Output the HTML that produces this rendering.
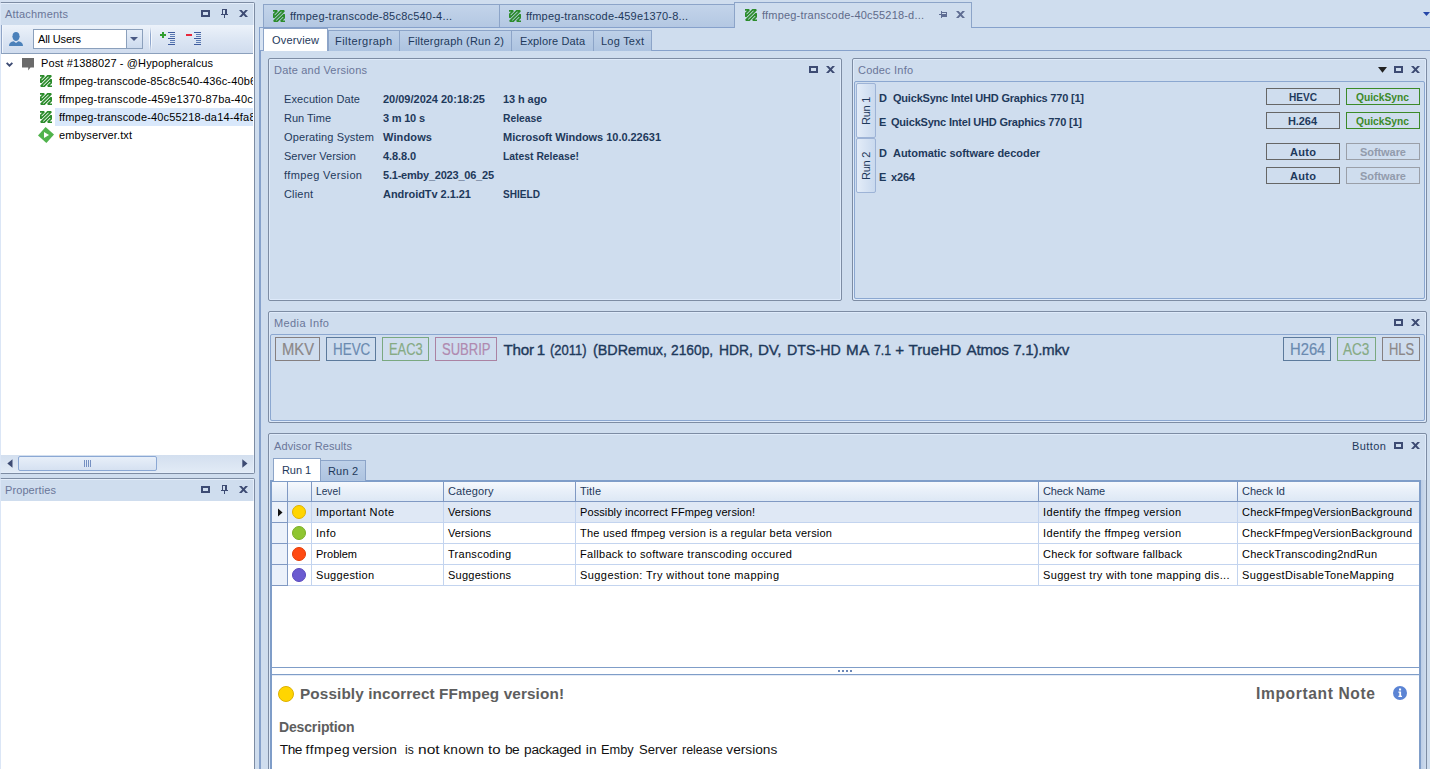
<!DOCTYPE html>
<html><head><meta charset="utf-8"><title>Diagnostics</title>
<style>
html,body{margin:0;padding:0;}
body{width:1430px;height:769px;overflow:hidden;position:relative;background:#cfddee;font-family:"Liberation Sans",sans-serif;}
body div,body span.t,body svg{position:absolute;box-sizing:border-box;}
span.t{white-space:pre;}

</style></head>
<body>
<div style="left:0px;top:0px;width:256px;height:2px;background:#d5e1f1"></div>
<div style="left:0px;top:2px;width:255px;height:472px;border:1px solid #7d8ca3;border-left:1px solid #dbe6f6;border-radius:0 2px 2px 0;background:#fff"></div>
<div style="left:1px;top:3px;width:253px;height:1px;background:#e4eefb"></div>
<div style="left:1px;top:4px;width:252px;height:21px;background:#cfddee"></div>
<span class="t" style="left:5px;top:8.69px;font-size:11px;line-height:11px;font-weight:400;color:#6a7699;letter-spacing:0.186px;">Attachments</span>
<svg style="left:201px;top:10px" width="9" height="7" viewBox="0 0 9 7" shape-rendering="crispEdges"><path d="M0 0h9v7h-9z M2 2v3h5v-3z" fill="#3d4b73" fill-rule="evenodd"/></svg>
<svg style="left:221px;top:9px" width="7" height="9" viewBox="0 0 7 9" shape-rendering="crispEdges"><path d="M1 0h5v5h1v1h-3v3h-1v-3h-3v-1h1z M2 1v4h2v-4z" fill="#3d4b73" fill-rule="evenodd"/></svg>
<svg style="left:239px;top:10px" width="9" height="7" viewBox="0 0 9 7"><path d="M0 0h2.6l1.9 2 1.9-2h2.6l-3.2 3.5 3.2 3.5h-2.6l-1.9-2-1.9 2h-2.6l3.2-3.5z" fill="#3d4b73"/></svg>
<div style="left:1px;top:25px;width:252px;height:29px;background:linear-gradient(#ecf2fa,#dbe5f3 55%,#d0dcee);border-bottom:1px solid #8ba0bc;border-left:1px solid #8fa4c6;box-shadow:inset 1px 0 0 #f0f5fc"></div>
<svg style="left:9px;top:32px" width="14" height="14" viewBox="0 0 14 14"><path d="M7 0c2 0 3.4 1.3 3.4 3.4v.7c.5 0 .5 1.2 0 1.3-.3 2-1.700 3.500-3.400 3.500s-3.100-1.500-3.400-3.500c-.5-.1-.5-1.300 0-1.300v-.7C3.600 1.300 5 0 7 0z" fill="#4b81ba"/><path d="M0 14c0-3 1.800-4.100 4.700-4.700L7 11l2.300-1.700c2.900.6 4.700 1.700 4.700 4.700z" fill="#4b81ba"/></svg>
<div style="left:33px;top:29px;width:110px;height:20px;background:#fff;border:1px solid #8ba0bc"></div>
<div style="left:126px;top:30px;width:16px;height:18px;background:linear-gradient(#e6eef9,#cddbee);border-left:1px solid #8ba0bc"></div>
<svg style="left:130px;top:37px" width="8" height="4" viewBox="0 0 8 4"><path d="M0 0h8l-4 4z" fill="#4a5a85"/></svg>
<span class="t" style="left:38px;top:33.69px;font-size:11px;line-height:11px;font-weight:400;color:#000;letter-spacing:-0.127px;">All Users</span>
<div style="left:149px;top:27px;width:3px;height:24px;background:linear-gradient(rgba(255,255,255,0),#f4f8fd 30%,#f4f8fd 70%,rgba(255,255,255,0))"></div>
<div style="left:150px;top:27px;width:1px;height:24px;background:linear-gradient(rgba(110,135,185,0),#8fa6cc 30%,#8fa6cc 70%,rgba(110,135,185,0))"></div>
<svg style="left:160px;top:32px" width="6" height="6" viewBox="0 0 6 6" shape-rendering="crispEdges"><path d="M2 0h2v2h2v2h-2v2h-2v-2h-2v-2h2z" fill="#2f9e2f"/></svg>
<svg style="left:168px;top:32px" width="7" height="13" viewBox="0 0 7 13" shape-rendering="crispEdges"><path d="M0 0h7v1h-7zM0 6h7v1h-7zM0 12h7v1h-7z" fill="#3f5c9e"/><path d="M2 2h5v1h-5zM2 4h5v1h-5zM2 8h5v1h-5zM2 10h5v1h-5z" fill="#5c7bb4"/></svg>
<svg style="left:186px;top:34px" width="6" height="2" viewBox="0 0 6 2" shape-rendering="crispEdges"><rect width="6" height="2" fill="#e8283c"/></svg>
<svg style="left:194px;top:32px" width="7" height="13" viewBox="0 0 7 13" shape-rendering="crispEdges"><path d="M0 0h7v1h-7zM0 6h7v1h-7zM0 12h7v1h-7z" fill="#3f5c9e"/><path d="M2 2h5v1h-5zM2 4h5v1h-5zM2 8h5v1h-5zM2 10h5v1h-5z" fill="#5c7bb4"/></svg>
<svg style="left:6px;top:62px" width="7" height="5" viewBox="0 0 7 5"><path d="M.6 .8L3.500 3.700 6.400 .8" stroke="#3d4b73" stroke-width="1.9" fill="none"/></svg>
<svg style="left:22px;top:58px" width="12" height="13" viewBox="0 0 12 13"><path d="M0 0h12v9.5h-3.5l-2.3 3v-3h-6.2z" fill="#6a6a6a"/></svg>
<span class="t" style="left:41px;top:57.69px;font-size:11px;line-height:11px;font-weight:400;color:#000;letter-spacing:0.127px;">Post #1388027 - @Hypopheralcus</span>
<div style="left:55px;top:108px;width:198px;height:18px;background:#d9e8fb"></div>
<span class="t" style="left:59px;top:75.69px;font-size:11px;line-height:11px;font-weight:400;color:#000;letter-spacing:0.135px;width:194px;overflow:hidden;">ffmpeg-transcode-85c8c540-436c-40b6</span>
<span class="t" style="left:59px;top:93.69px;font-size:11px;line-height:11px;font-weight:400;color:#000;letter-spacing:0.187px;width:194px;overflow:hidden;">ffmpeg-transcode-459e1370-87ba-40c5</span>
<span class="t" style="left:59px;top:111.69px;font-size:11px;line-height:11px;font-weight:400;color:#000;letter-spacing:0.174px;width:194px;overflow:hidden;">ffmpeg-transcode-40c55218-da14-4fa8</span>
<svg style="left:40px;top:75px" width="12" height="12" viewBox="0 0 12 12"><path d="M0 .8H4.2L.8 4.2V7.7L7.7 .8H11.2L.8 11.2H4.3L11.2 4.3V7.8L7.8 11.2H12" stroke="#2c8c2c" stroke-width="1.65" fill="none" stroke-linejoin="miter" stroke-miterlimit="2"/></svg>
<svg style="left:40px;top:93px" width="12" height="12" viewBox="0 0 12 12"><path d="M0 .8H4.2L.8 4.2V7.7L7.7 .8H11.2L.8 11.2H4.3L11.2 4.3V7.8L7.8 11.2H12" stroke="#2c8c2c" stroke-width="1.65" fill="none" stroke-linejoin="miter" stroke-miterlimit="2"/></svg>
<svg style="left:40px;top:111px" width="12" height="12" viewBox="0 0 12 12"><path d="M0 .8H4.2L.8 4.2V7.7L7.7 .8H11.2L.8 11.2H4.3L11.2 4.3V7.8L7.8 11.2H12" stroke="#2c8c2c" stroke-width="1.65" fill="none" stroke-linejoin="miter" stroke-miterlimit="2"/></svg>
<svg style="left:38px;top:127px" width="16" height="16" viewBox="0 0 16 16"><path d="M7.6 0L16 7.6 8.4 16 0 8.4z" fill="#50b34c"/><path d="M6 5L11 8 6 11z" fill="#fff"/></svg>
<span class="t" style="left:59px;top:129.69px;font-size:11px;line-height:11px;font-weight:400;color:#000;letter-spacing:0.113px;">embyserver.txt</span>
<div style="left:1px;top:455px;width:252px;height:18px;background:linear-gradient(#d3dfef,#e2ebf6)"></div>
<div style="left:18px;top:456px;width:139px;height:15px;background:linear-gradient(#e8eff9,#d5e1f1);border:1px solid #8ba8d4;border-radius:2px"></div>
<svg style="left:7px;top:459px" width="6" height="9" viewBox="0 0 6 9"><path d="M5.500 .3v8.400L.3 4.500z" fill="#3d4b73"/></svg>
<svg style="left:242px;top:459px" width="6" height="9" viewBox="0 0 6 9"><path d="M.3 .3v8.400l5.200-4.200z" fill="#3d4b73"/></svg>
<svg style="left:84px;top:460px" width="8" height="7" viewBox="0 0 8 7"><path d="M.5 0v7M2.5 0v7M4.5 0v7M6.5 0v7" stroke="#7590c2" stroke-width="1"/></svg>
<div style="left:1px;top:472px;width:253px;height:1px;background:#e4eefb"></div>
<div style="left:253px;top:4px;width:1px;height:21px;background:#e4eefb"></div>
<div style="left:253px;top:455px;width:1px;height:18px;background:#e4eefb"></div>
<div style="left:0px;top:478px;width:255px;height:300px;border:1px solid #7d8ca3;border-left:1px solid #dbe6f6;border-radius:0 2px 0 0;background:#fff"></div>
<div style="left:1px;top:479px;width:253px;height:1px;background:#e4eefb"></div>
<div style="left:1px;top:480px;width:252px;height:21px;background:#cfddee"></div>
<div style="left:253px;top:480px;width:1px;height:21px;background:#e4eefb"></div>
<span class="t" style="left:5px;top:484.69px;font-size:11px;line-height:11px;font-weight:400;color:#6a7699;letter-spacing:0.095px;">Properties</span>
<svg style="left:201px;top:486px" width="9" height="7" viewBox="0 0 9 7" shape-rendering="crispEdges"><path d="M0 0h9v7h-9z M2 2v3h5v-3z" fill="#3d4b73" fill-rule="evenodd"/></svg>
<svg style="left:221px;top:485px" width="7" height="9" viewBox="0 0 7 9" shape-rendering="crispEdges"><path d="M1 0h5v5h1v1h-3v3h-1v-3h-3v-1h1z M2 1v4h2v-4z" fill="#3d4b73" fill-rule="evenodd"/></svg>
<svg style="left:239px;top:486px" width="9" height="7" viewBox="0 0 9 7"><path d="M0 0h2.6l1.9 2 1.9-2h2.6l-3.2 3.5 3.2 3.5h-2.6l-1.9-2-1.9 2h-2.6l3.2-3.5z" fill="#3d4b73"/></svg>
<div style="left:263px;top:4px;width:237px;height:24px;background:linear-gradient(#c3d4ea,#b3c7e2);border:1px solid #8ca4c8;border-bottom:none"></div>
<svg style="left:273px;top:10px" width="12" height="12" viewBox="0 0 12 12"><path d="M0 .8H4.2L.8 4.2V7.7L7.7 .8H11.2L.8 11.2H4.3L11.2 4.3V7.8L7.8 11.2H12" stroke="#2c8c2c" stroke-width="1.65" fill="none" stroke-linejoin="miter" stroke-miterlimit="2"/></svg>
<span class="t" style="left:290px;top:10.69px;font-size:11px;line-height:11px;font-weight:400;color:#1e395b;letter-spacing:0.217px;">ffmpeg-transcode-85c8c540-4...</span>
<div style="left:499px;top:4px;width:236px;height:24px;background:linear-gradient(#c3d4ea,#b3c7e2);border:1px solid #8ca4c8;border-bottom:none"></div>
<svg style="left:509px;top:10px" width="12" height="12" viewBox="0 0 12 12"><path d="M0 .8H4.2L.8 4.2V7.7L7.7 .8H11.2L.8 11.2H4.3L11.2 4.3V7.8L7.8 11.2H12" stroke="#2c8c2c" stroke-width="1.65" fill="none" stroke-linejoin="miter" stroke-miterlimit="2"/></svg>
<span class="t" style="left:526px;top:10.69px;font-size:11px;line-height:11px;font-weight:400;color:#1e395b;letter-spacing:0.173px;">ffmpeg-transcode-459e1370-8...</span>
<div style="left:259px;top:27px;width:1171px;height:1px;background:#86a1cb"></div>
<div style="left:259px;top:27px;width:2px;height:760px;background:#86a1cb"></div>
<div style="left:734px;top:2px;width:238px;height:26px;background:#cfddee;border:1px solid #8ca4c8;border-bottom:none"></div>
<div style="left:735px;top:27px;width:236px;height:1px;background:#cfddee"></div>
<svg style="left:745px;top:9px" width="12" height="12" viewBox="0 0 12 12"><path d="M0 .8H4.2L.8 4.2V7.7L7.7 .8H11.2L.8 11.2H4.3L11.2 4.3V7.8L7.8 11.2H12" stroke="#2c8c2c" stroke-width="1.65" fill="none" stroke-linejoin="miter" stroke-miterlimit="2"/></svg>
<span class="t" style="left:762px;top:9.69px;font-size:11px;line-height:11px;font-weight:400;color:#5f6b8a;letter-spacing:0.195px;">ffmpeg-transcode-40c55218-d...</span>
<svg style="left:939px;top:11px" width="8" height="7" viewBox="0 0 8 7" shape-rendering="crispEdges"><path d="M2 0h1v1h5v5h-5v1h-1v-3h-2v-1h2z M3 2v1h4v-1z" fill="#5f6d93" fill-rule="evenodd"/></svg>
<svg style="left:956px;top:11px" width="9" height="7" viewBox="0 0 9 7"><path d="M0 0h2.600l1.900 2 1.900-2h2.600l-3.200 3.500 3.200 3.500h-2.600l-1.900-2-1.900 2h-2.600l3.200-3.500z" fill="#5f6d93"/></svg>
<svg style="left:1423px;top:12px" width="7" height="4" viewBox="0 0 7 4"><path d="M0 0h7l-3.5 4z" fill="#2546a8"/></svg>
<div style="left:260px;top:28px;width:3px;height:22px;background:#d7e3f2"></div>
<div style="left:260px;top:50px;width:4px;height:1px;background:#86a1cb"></div>
<div style="left:261px;top:50px;width:1169px;height:1px;background:#86a1cb"></div>
<div style="left:328px;top:30px;width:72px;height:21px;background:linear-gradient(#bdd0e8,#adc3e0);border:1px solid #8ca4c8;border-bottom:none"></div>
<span class="t" style="left:335px;top:35.69px;font-size:11px;line-height:11px;font-weight:400;color:#1e395b;letter-spacing:0.442px;">Filtergraph</span>
<div style="left:400px;top:30px;width:112px;height:21px;background:linear-gradient(#bdd0e8,#adc3e0);border:1px solid #8ca4c8;border-bottom:none;border-left:none"></div>
<span class="t" style="left:408px;top:35.69px;font-size:11px;line-height:11px;font-weight:400;color:#1e395b;letter-spacing:0.204px;">Filtergraph (Run 2)</span>
<div style="left:512px;top:30px;width:82px;height:21px;background:linear-gradient(#bdd0e8,#adc3e0);border:1px solid #8ca4c8;border-bottom:none;border-left:none"></div>
<span class="t" style="left:520px;top:35.69px;font-size:11px;line-height:11px;font-weight:400;color:#1e395b;letter-spacing:0.128px;">Explore Data</span>
<div style="left:594px;top:30px;width:58px;height:21px;background:linear-gradient(#bdd0e8,#adc3e0);border:1px solid #8ca4c8;border-bottom:none;border-left:none"></div>
<span class="t" style="left:601px;top:35.69px;font-size:11px;line-height:11px;font-weight:400;color:#1e395b;letter-spacing:0.23px;">Log Text</span>
<div style="left:263px;top:28px;width:65px;height:23px;background:#fff;border:1px solid #8ca4c8;border-bottom:none"></div>
<span class="t" style="left:272px;top:34.69px;font-size:11px;line-height:11px;font-weight:400;color:#1e395b;letter-spacing:0.165px;">Overview</span>
<div style="left:268px;top:58px;width:574px;height:243px;border:1px solid #7d8ca3;border-radius:2px;box-shadow:inset 0 0 0 1px #deeafa"></div>
<span class="t" style="left:274px;top:64.69px;font-size:11px;line-height:11px;font-weight:400;color:#6a7699;letter-spacing:0.194px;">Date and Versions</span>
<svg style="left:809px;top:66px" width="9" height="7" viewBox="0 0 9 7" shape-rendering="crispEdges"><path d="M0 0h9v7h-9z M2 2v3h5v-3z" fill="#3d4b73" fill-rule="evenodd"/></svg>
<svg style="left:826px;top:66px" width="9" height="7" viewBox="0 0 9 7"><path d="M0 0h2.6l1.9 2 1.9-2h2.6l-3.2 3.5 3.2 3.5h-2.6l-1.9-2-1.9 2h-2.6l3.2-3.5z" fill="#3d4b73"/></svg>
<span class="t" style="left:284px;top:93.69px;font-size:11px;line-height:11px;font-weight:400;color:#1e395b;letter-spacing:0.107px;">Execution Date</span>
<span class="t" style="left:383px;top:93.69px;font-size:11px;line-height:11px;font-weight:700;color:#1e395b;letter-spacing:-0.009px;">20/09/2024 20:18:25</span>
<span class="t" style="left:503px;top:93.69px;font-size:11px;line-height:11px;font-weight:700;color:#1e395b;letter-spacing:-0.089px;">13 h ago</span>
<span class="t" style="left:284px;top:112.69px;font-size:11px;line-height:11px;font-weight:400;color:#1e395b;letter-spacing:-0.011px;">Run Time</span>
<span class="t" style="left:383px;top:112.69px;font-size:11px;line-height:11px;font-weight:700;color:#1e395b;letter-spacing:-0.203px;">3 m 10 s</span>
<span class="t" style="left:503px;top:112.69px;font-size:11px;line-height:11px;font-weight:700;color:#1e395b;transform:scaleX(0.9376);transform-origin:0 0;">Release</span>
<span class="t" style="left:284px;top:131.69px;font-size:11px;line-height:11px;font-weight:400;color:#1e395b;letter-spacing:0.13px;">Operating System</span>
<span class="t" style="left:383px;top:131.69px;font-size:11px;line-height:11px;font-weight:700;color:#1e395b;letter-spacing:0.135px;">Windows</span>
<span class="t" style="left:503px;top:131.69px;font-size:11px;line-height:11px;font-weight:700;color:#1e395b;letter-spacing:-0.031px;">Microsoft Windows 10.0.22631</span>
<span class="t" style="left:284px;top:150.69px;font-size:11px;line-height:11px;font-weight:400;color:#1e395b;letter-spacing:-0.012px;">Server Version</span>
<span class="t" style="left:383px;top:150.69px;font-size:11px;line-height:11px;font-weight:700;color:#1e395b;letter-spacing:-0.107px;">4.8.8.0</span>
<span class="t" style="left:503px;top:150.69px;font-size:11px;line-height:11px;font-weight:700;color:#1e395b;transform:scaleX(0.9415);transform-origin:0 0;">Latest Release!</span>
<span class="t" style="left:284px;top:169.69px;font-size:11px;line-height:11px;font-weight:400;color:#1e395b;letter-spacing:0.37px;">ffmpeg Version</span>
<span class="t" style="left:383px;top:169.69px;font-size:11px;line-height:11px;font-weight:700;color:#1e395b;letter-spacing:-0.221px;">5.1-emby_2023_06_25</span>
<span class="t" style="left:284px;top:188.69px;font-size:11px;line-height:11px;font-weight:400;color:#1e395b;letter-spacing:0.175px;">Client</span>
<span class="t" style="left:383px;top:188.69px;font-size:11px;line-height:11px;font-weight:700;color:#1e395b;letter-spacing:-0.043px;">AndroidTv 2.1.21</span>
<span class="t" style="left:503px;top:188.69px;font-size:11px;line-height:11px;font-weight:700;color:#1e395b;transform:scaleX(0.9171);transform-origin:0 0;">SHIELD</span>
<div style="left:852px;top:58px;width:575px;height:243px;border:1px solid #7d8ca3;border-radius:2px;box-shadow:inset 0 0 0 1px #deeafa"></div>
<span class="t" style="left:858px;top:64.69px;font-size:11px;line-height:11px;font-weight:400;color:#6a7699;letter-spacing:0.2px;">Codec Info</span>
<svg style="left:1378px;top:67px" width="9" height="6" viewBox="0 0 9 6"><path d="M0 0h9l-4.5 5.8z" fill="#222"/></svg>
<svg style="left:1394px;top:66px" width="9" height="7" viewBox="0 0 9 7" shape-rendering="crispEdges"><path d="M0 0h9v7h-9z M2 2v3h5v-3z" fill="#3d4b73" fill-rule="evenodd"/></svg>
<svg style="left:1411px;top:66px" width="9" height="7" viewBox="0 0 9 7"><path d="M0 0h2.6l1.9 2 1.9-2h2.6l-3.2 3.5 3.2 3.5h-2.6l-1.9-2-1.9 2h-2.6l3.2-3.5z" fill="#3d4b73"/></svg>
<div style="left:854px;top:81px;width:571px;height:218px;border:1px solid #8ba7d0;border-radius:2px"></div>
<div style="left:856px;top:83px;width:20px;height:55px;background:linear-gradient(90deg,#e3ecf8,#c9d9ee);border:1px solid #9db3d6;border-radius:2px"></div>
<span class="t" style="left:866px;top:110.5px;font-size:11px;line-height:11px;color:#1e395b;letter-spacing:-.25px;transform:translate(-50%,-50%) rotate(-90deg)">Run 1</span>
<div style="left:856px;top:138px;width:20px;height:55px;background:linear-gradient(90deg,#e3ecf8,#c9d9ee);border:1px solid #9db3d6;border-radius:2px"></div>
<span class="t" style="left:866px;top:165.5px;font-size:11px;line-height:11px;color:#1e395b;letter-spacing:-.25px;transform:translate(-50%,-50%) rotate(-90deg)">Run 2</span>
<span class="t" style="left:879px;top:92.69px;font-size:11px;line-height:11px;font-weight:700;color:#1e395b;">D</span>
<span class="t" style="left:893px;top:92.69px;font-size:11px;line-height:11px;font-weight:700;color:#1e395b;letter-spacing:-0.202px;">QuickSync Intel UHD Graphics 770 [1]</span>
<div style="left:1266px;top:88px;width:74px;height:17px;border:1px solid #666"></div>
<span class="t" style="left:1289px;top:91.99px;font-size:11px;line-height:11px;font-weight:700;color:#1e395b;transform:scaleX(0.9162);transform-origin:0 0;">HEVC</span>
<div style="left:1346px;top:88px;width:74px;height:17px;border:1px solid #3c8a28"></div>
<span class="t" style="left:1356px;top:91.99px;font-size:11px;line-height:11px;font-weight:700;color:#3c8a28;transform:scaleX(0.9321);transform-origin:0 0;">QuickSync</span>
<span class="t" style="left:879px;top:116.69px;font-size:11px;line-height:11px;font-weight:700;color:#1e395b;">E</span>
<span class="t" style="left:891px;top:116.69px;font-size:11px;line-height:11px;font-weight:700;color:#1e395b;letter-spacing:-0.202px;">QuickSync Intel UHD Graphics 770 [1]</span>
<div style="left:1266px;top:112px;width:74px;height:17px;border:1px solid #666"></div>
<span class="t" style="left:1288px;top:115.99px;font-size:11px;line-height:11px;font-weight:700;color:#1e395b;letter-spacing:-0.09px;">H.264</span>
<div style="left:1346px;top:112px;width:74px;height:17px;border:1px solid #3c8a28"></div>
<span class="t" style="left:1356px;top:115.99px;font-size:11px;line-height:11px;font-weight:700;color:#3c8a28;transform:scaleX(0.9321);transform-origin:0 0;">QuickSync</span>
<span class="t" style="left:879px;top:147.69px;font-size:11px;line-height:11px;font-weight:700;color:#1e395b;">D</span>
<span class="t" style="left:893px;top:147.69px;font-size:11px;line-height:11px;font-weight:700;color:#1e395b;letter-spacing:-0.037px;">Automatic software decoder</span>
<div style="left:1266px;top:143px;width:74px;height:17px;border:1px solid #666"></div>
<span class="t" style="left:1290px;top:146.99px;font-size:11px;line-height:11px;font-weight:700;color:#1e395b;letter-spacing:0.318px;">Auto</span>
<div style="left:1346px;top:143px;width:74px;height:17px;border:1px solid #9a9fa8"></div>
<span class="t" style="left:1360px;top:146.99px;font-size:11px;line-height:11px;font-weight:700;color:#929bac;letter-spacing:-0.067px;">Software</span>
<span class="t" style="left:879px;top:171.69px;font-size:11px;line-height:11px;font-weight:700;color:#1e395b;">E</span>
<span class="t" style="left:891px;top:171.69px;font-size:11px;line-height:11px;font-weight:700;color:#1e395b;letter-spacing:-0.161px;">x264</span>
<div style="left:1266px;top:167px;width:74px;height:17px;border:1px solid #666"></div>
<span class="t" style="left:1290px;top:170.99px;font-size:11px;line-height:11px;font-weight:700;color:#1e395b;letter-spacing:0.318px;">Auto</span>
<div style="left:1346px;top:167px;width:74px;height:17px;border:1px solid #9a9fa8"></div>
<span class="t" style="left:1360px;top:170.99px;font-size:11px;line-height:11px;font-weight:700;color:#929bac;letter-spacing:-0.067px;">Software</span>
<div style="left:268px;top:311px;width:1159px;height:112px;border:1px solid #7d8ca3;border-radius:2px;box-shadow:inset 0 0 0 1px #deeafa"></div>
<span class="t" style="left:274px;top:317.69px;font-size:11px;line-height:11px;font-weight:400;color:#6a7699;letter-spacing:0.403px;">Media Info</span>
<svg style="left:1394px;top:319px" width="9" height="7" viewBox="0 0 9 7" shape-rendering="crispEdges"><path d="M0 0h9v7h-9z M2 2v3h5v-3z" fill="#3d4b73" fill-rule="evenodd"/></svg>
<svg style="left:1411px;top:319px" width="9" height="7" viewBox="0 0 9 7"><path d="M0 0h2.6l1.9 2 1.9-2h2.6l-3.2 3.5 3.2 3.5h-2.6l-1.9-2-1.9 2h-2.6l3.2-3.5z" fill="#3d4b73"/></svg>
<div style="left:270px;top:334px;width:1155px;height:87px;border:1px solid #8ba7d0;border-radius:2px"></div>
<div style="left:275px;top:337px;width:45px;height:24px;border:1px solid #857f80"></div>
<span class="t" style="left:281.5px;top:341.66px;font-size:16px;line-height:16px;font-weight:400;color:#8b8788;transform:scaleX(0.9229);transform-origin:0 0;-webkit-text-stroke:0.2px #8b8788;">MKV</span>
<div style="left:326px;top:337px;width:50px;height:24px;border:1px solid #5c7a9c"></div>
<span class="t" style="left:332.5px;top:341.66px;font-size:16px;line-height:16px;font-weight:400;color:#6a8ab0;transform:scaleX(0.8391);transform-origin:0 0;-webkit-text-stroke:0.2px #6a8ab0;">HEVC</span>
<div style="left:382px;top:337px;width:47px;height:24px;border:1px solid #7aa880"></div>
<span class="t" style="left:388.5px;top:341.66px;font-size:16px;line-height:16px;font-weight:400;color:#86aa84;transform:scaleX(0.8063);transform-origin:0 0;-webkit-text-stroke:0.2px #86aa84;">EAC3</span>
<div style="left:435px;top:337px;width:62px;height:24px;border:1px solid #ab82a2"></div>
<span class="t" style="left:441.5px;top:341.66px;font-size:16px;line-height:16px;font-weight:400;color:#b08ab0;transform:scaleX(0.8141);transform-origin:0 0;-webkit-text-stroke:0.2px #b08ab0;">SUBRIP</span>
<span class="t" style="left:503.4px;top:342.33px;font-size:15.2px;line-height:15.2px;font-weight:400;color:#1e395b;letter-spacing:-0.178px;-webkit-text-stroke:0.38px #1e395b;">Thor</span>
<span class="t" style="left:536.8px;top:342.33px;font-size:15.2px;line-height:15.2px;font-weight:400;color:#1e395b;-webkit-text-stroke:0.38px #1e395b;">1</span>
<span class="t" style="left:549.5px;top:342.33px;font-size:15.2px;line-height:15.2px;font-weight:400;color:#1e395b;transform:scaleX(0.8555);transform-origin:0 0;-webkit-text-stroke:0.38px #1e395b;">(2011)</span>
<span class="t" style="left:592.5px;top:342.33px;font-size:15.2px;line-height:15.2px;font-weight:400;color:#1e395b;transform:scaleX(0.9429);transform-origin:0 0;-webkit-text-stroke:0.38px #1e395b;">(BDRemux,</span>
<span class="t" style="left:671.4px;top:342.33px;font-size:15.2px;line-height:15.2px;font-weight:400;color:#1e395b;transform:scaleX(0.9084);transform-origin:0 0;-webkit-text-stroke:0.38px #1e395b;">2160p,</span>
<span class="t" style="left:718.9px;top:342.33px;font-size:15.2px;line-height:15.2px;font-weight:400;color:#1e395b;transform:scaleX(0.9131);transform-origin:0 0;-webkit-text-stroke:0.38px #1e395b;">HDR,</span>
<span class="t" style="left:758.1px;top:342.33px;font-size:15.2px;line-height:15.2px;font-weight:400;color:#1e395b;letter-spacing:-0.269px;-webkit-text-stroke:0.38px #1e395b;">DV,</span>
<span class="t" style="left:786.5px;top:342.33px;font-size:15.2px;line-height:15.2px;font-weight:400;color:#1e395b;transform:scaleX(0.9359);transform-origin:0 0;-webkit-text-stroke:0.38px #1e395b;">DTS-HD</span>
<span class="t" style="left:845.9px;top:342.33px;font-size:15.2px;line-height:15.2px;font-weight:400;color:#1e395b;letter-spacing:0.619px;-webkit-text-stroke:0.38px #1e395b;">MA</span>
<span class="t" style="left:873.5px;top:342.33px;font-size:15.2px;line-height:15.2px;font-weight:400;color:#1e395b;transform:scaleX(0.8095);transform-origin:0 0;-webkit-text-stroke:0.38px #1e395b;">7.1</span>
<span class="t" style="left:895.3px;top:342.33px;font-size:15.2px;line-height:15.2px;font-weight:400;color:#1e395b;-webkit-text-stroke:0.38px #1e395b;">+</span>
<span class="t" style="left:908.5px;top:342.33px;font-size:15.2px;line-height:15.2px;font-weight:400;color:#1e395b;letter-spacing:0.038px;-webkit-text-stroke:0.38px #1e395b;">TrueHD</span>
<span class="t" style="left:966.4px;top:342.33px;font-size:15.2px;line-height:15.2px;font-weight:400;color:#1e395b;letter-spacing:-0.137px;-webkit-text-stroke:0.38px #1e395b;">Atmos</span>
<span class="t" style="left:1013.2px;top:342.33px;font-size:15.2px;line-height:15.2px;font-weight:400;color:#1e395b;letter-spacing:-0.305px;-webkit-text-stroke:0.38px #1e395b;">7.1).mkv</span>
<div style="left:1283px;top:337px;width:48px;height:24px;border:1px solid #5c7a9c"></div>
<span class="t" style="left:1289.6px;top:341.66px;font-size:16px;line-height:16px;font-weight:400;color:#6a8ab0;transform:scaleX(0.9229);transform-origin:0 0;-webkit-text-stroke:0.2px #6a8ab0;">H264</span>
<div style="left:1337px;top:337px;width:39px;height:24px;border:1px solid #7aa880"></div>
<span class="t" style="left:1343px;top:341.66px;font-size:16px;line-height:16px;font-weight:400;color:#86aa84;transform:scaleX(0.8482);transform-origin:0 0;-webkit-text-stroke:0.2px #86aa84;">AC3</span>
<div style="left:1382px;top:337px;width:38px;height:24px;border:1px solid #857f80"></div>
<span class="t" style="left:1388.6px;top:341.66px;font-size:16px;line-height:16px;font-weight:400;color:#8b8788;transform:scaleX(0.8064);transform-origin:0 0;-webkit-text-stroke:0.2px #8b8788;">HLS</span>
<div style="left:268px;top:433px;width:1159px;height:400px;border:1px solid #7d8ca3;border-radius:2px;box-shadow:inset 0 0 0 1px #deeafa"></div>
<span class="t" style="left:274px;top:440.69px;font-size:11px;line-height:11px;font-weight:400;color:#6a7699;letter-spacing:0.113px;">Advisor Results</span>
<span class="t" style="left:1352px;top:440.69px;font-size:11px;line-height:11px;font-weight:400;color:#1e395b;letter-spacing:0.438px;">Button</span>
<svg style="left:1394px;top:442px" width="9" height="7" viewBox="0 0 9 7" shape-rendering="crispEdges"><path d="M0 0h9v7h-9z M2 2v3h5v-3z" fill="#3d4b73" fill-rule="evenodd"/></svg>
<svg style="left:1411px;top:442px" width="9" height="7" viewBox="0 0 9 7"><path d="M0 0h2.6l1.9 2 1.9-2h2.6l-3.2 3.5 3.2 3.5h-2.6l-1.9-2-1.9 2h-2.6l3.2-3.5z" fill="#3d4b73"/></svg>
<div style="left:1421px;top:480px;width:5px;height:300px;background:linear-gradient(90deg,#bccde6,#cfddee)"></div>
<div style="left:270px;top:480px;width:1151px;height:300px;border:2px solid #7f9dc8;background:#fff"></div>
<div style="left:321px;top:460px;width:45px;height:21px;background:linear-gradient(#bdd0e8,#adc3e0);border:1px solid #8ca4c8;border-bottom:none;border-left:none"></div>
<span class="t" style="left:328px;top:465.69px;font-size:11px;line-height:11px;font-weight:400;color:#1e395b;letter-spacing:0.16px;">Run 2</span>
<div style="left:273px;top:458px;width:48px;height:23px;background:#fff;border:1px solid #8ca4c8;border-bottom:none"></div>
<span class="t" style="left:282px;top:464.69px;font-size:11px;line-height:11px;font-weight:400;color:#1e395b;letter-spacing:-0.09px;">Run 1</span>
<div style="left:272px;top:482px;width:1147px;height:19px;background:linear-gradient(#f6f9fd,#e9f0f9 45%,#dde8f5)"></div>
<div style="left:272px;top:501px;width:1147px;height:1px;background:#8099c3"></div>
<div style="left:287px;top:482px;width:1px;height:19px;background:#8099c3"></div>
<div style="left:311px;top:482px;width:1px;height:19px;background:#8099c3"></div>
<div style="left:443px;top:482px;width:1px;height:19px;background:#8099c3"></div>
<div style="left:575px;top:482px;width:1px;height:19px;background:#8099c3"></div>
<div style="left:1038px;top:482px;width:1px;height:19px;background:#8099c3"></div>
<div style="left:1237px;top:482px;width:1px;height:19px;background:#8099c3"></div>
<span class="t" style="left:316px;top:485.69px;font-size:11px;line-height:11px;font-weight:400;color:#1e395b;transform:scaleX(0.9279);transform-origin:0 0;">Level</span>
<span class="t" style="left:448px;top:485.69px;font-size:11px;line-height:11px;font-weight:400;color:#1e395b;letter-spacing:0.137px;">Category</span>
<span class="t" style="left:580px;top:485.69px;font-size:11px;line-height:11px;font-weight:400;color:#1e395b;letter-spacing:0.156px;">Title</span>
<span class="t" style="left:1043px;top:485.69px;font-size:11px;line-height:11px;font-weight:400;color:#1e395b;letter-spacing:-0.175px;">Check Name</span>
<span class="t" style="left:1242px;top:485.69px;font-size:11px;line-height:11px;font-weight:400;color:#1e395b;letter-spacing:-0.06px;">Check Id</span>
<div style="left:288px;top:502px;width:1131px;height:20px;background:#dfe8f5"></div>
<div style="left:272px;top:502px;width:15px;height:20px;background:#ebf1fa"></div>
<div style="left:272px;top:522px;width:1147px;height:1px;background:#c3d4ef"></div>
<div style="left:272px;top:522px;width:16px;height:1px;background:#8099c3"></div>
<svg style="left:292.0px;top:505.0px" width="14" height="14" viewBox="0 0 14 14"><circle cx="7.0" cy="7.0" r="6.5" fill="#ffd500" stroke="#ddb000" stroke-width="1"/></svg>
<span class="t" style="left:316px;top:506.69px;font-size:11px;line-height:11px;font-weight:400;color:#000;letter-spacing:0.403px;">Important Note</span>
<span class="t" style="left:448px;top:506.69px;font-size:11px;line-height:11px;font-weight:400;color:#000;letter-spacing:0.114px;">Versions</span>
<span class="t" style="left:580px;top:506.69px;font-size:11px;line-height:11px;font-weight:400;color:#000;letter-spacing:0.098px;">Possibly incorrect FFmpeg version!</span>
<span class="t" style="left:1043px;top:506.69px;font-size:11px;line-height:11px;font-weight:400;color:#000;letter-spacing:0.353px;">Identify the ffmpeg version</span>
<span class="t" style="left:1242px;top:506.69px;font-size:11px;line-height:11px;font-weight:400;color:#000;letter-spacing:0.227px;">CheckFfmpegVersionBackground</span>
<div style="left:272px;top:523px;width:15px;height:20px;background:#ebf1fa"></div>
<div style="left:272px;top:543px;width:1147px;height:1px;background:#c3d4ef"></div>
<div style="left:272px;top:543px;width:16px;height:1px;background:#8099c3"></div>
<svg style="left:292.0px;top:526.0px" width="14" height="14" viewBox="0 0 14 14"><circle cx="7.0" cy="7.0" r="6.5" fill="#8fc531" stroke="#7aad28" stroke-width="1"/></svg>
<span class="t" style="left:316px;top:527.69px;font-size:11px;line-height:11px;font-weight:400;color:#000;letter-spacing:0.547px;">Info</span>
<span class="t" style="left:448px;top:527.69px;font-size:11px;line-height:11px;font-weight:400;color:#000;letter-spacing:0.114px;">Versions</span>
<span class="t" style="left:580px;top:527.69px;font-size:11px;line-height:11px;font-weight:400;color:#000;letter-spacing:0.222px;">The used ffmpeg version is a regular beta version</span>
<span class="t" style="left:1043px;top:527.69px;font-size:11px;line-height:11px;font-weight:400;color:#000;letter-spacing:0.353px;">Identify the ffmpeg version</span>
<span class="t" style="left:1242px;top:527.69px;font-size:11px;line-height:11px;font-weight:400;color:#000;letter-spacing:0.227px;">CheckFfmpegVersionBackground</span>
<div style="left:272px;top:544px;width:15px;height:20px;background:#ebf1fa"></div>
<div style="left:272px;top:564px;width:1147px;height:1px;background:#c3d4ef"></div>
<div style="left:272px;top:564px;width:16px;height:1px;background:#8099c3"></div>
<svg style="left:292.0px;top:547.0px" width="14" height="14" viewBox="0 0 14 14"><circle cx="7.0" cy="7.0" r="6.5" fill="#ff4a12" stroke="#e23c08" stroke-width="1"/></svg>
<span class="t" style="left:316px;top:548.69px;font-size:11px;line-height:11px;font-weight:400;color:#000;letter-spacing:0.005px;">Problem</span>
<span class="t" style="left:448px;top:548.69px;font-size:11px;line-height:11px;font-weight:400;color:#000;letter-spacing:0.287px;">Transcoding</span>
<span class="t" style="left:580px;top:548.69px;font-size:11px;line-height:11px;font-weight:400;color:#000;letter-spacing:0.309px;">Fallback to software transcoding occured</span>
<span class="t" style="left:1043px;top:548.69px;font-size:11px;line-height:11px;font-weight:400;color:#000;letter-spacing:0.267px;">Check for software fallback</span>
<span class="t" style="left:1242px;top:548.69px;font-size:11px;line-height:11px;font-weight:400;color:#000;letter-spacing:0.246px;">CheckTranscoding2ndRun</span>
<div style="left:272px;top:565px;width:15px;height:20px;background:#ebf1fa"></div>
<div style="left:272px;top:585px;width:1147px;height:1px;background:#c3d4ef"></div>
<div style="left:272px;top:585px;width:16px;height:1px;background:#8099c3"></div>
<svg style="left:292.0px;top:568.0px" width="14" height="14" viewBox="0 0 14 14"><circle cx="7.0" cy="7.0" r="6.5" fill="#6b5bd0" stroke="#5848bd" stroke-width="1"/></svg>
<span class="t" style="left:316px;top:569.69px;font-size:11px;line-height:11px;font-weight:400;color:#000;letter-spacing:0.328px;">Suggestion</span>
<span class="t" style="left:448px;top:569.69px;font-size:11px;line-height:11px;font-weight:400;color:#000;letter-spacing:0.245px;">Suggestions</span>
<span class="t" style="left:580px;top:569.69px;font-size:11px;line-height:11px;font-weight:400;color:#000;letter-spacing:0.427px;">Suggestion: Try without tone mapping</span>
<span class="t" style="left:1043px;top:569.69px;font-size:11px;line-height:11px;font-weight:400;color:#000;letter-spacing:0.35px;">Suggest try with tone mapping dis...</span>
<span class="t" style="left:1242px;top:569.69px;font-size:11px;line-height:11px;font-weight:400;color:#000;letter-spacing:0.37px;">SuggestDisableToneMapping</span>
<div style="left:287px;top:502px;width:1px;height:84px;background:#8099c3"></div>
<div style="left:311px;top:502px;width:1px;height:84px;background:#c3d4ef"></div>
<div style="left:443px;top:502px;width:1px;height:84px;background:#c3d4ef"></div>
<div style="left:575px;top:502px;width:1px;height:84px;background:#c3d4ef"></div>
<div style="left:1038px;top:502px;width:1px;height:84px;background:#c3d4ef"></div>
<div style="left:1237px;top:502px;width:1px;height:84px;background:#c3d4ef"></div>
<div style="left:287px;top:501px;width:1px;height:85px;background:#8099c3"></div>
<svg style="left:278px;top:508px" width="5" height="9" viewBox="0 0 5 9"><path d="M0 .5v8l4.5-4z" fill="#111"/></svg>
<div style="left:272px;top:667px;width:1147px;height:1px;background:#7f9dc8"></div>
<div style="left:272px;top:668px;width:1147px;height:6px;background:#fff"></div>
<div style="left:838px;top:670px;width:2px;height:2px;background:#6c88b8"></div>
<div style="left:842px;top:670px;width:2px;height:2px;background:#6c88b8"></div>
<div style="left:846px;top:670px;width:2px;height:2px;background:#6c88b8"></div>
<div style="left:850px;top:670px;width:2px;height:2px;background:#6c88b8"></div>
<div style="left:272px;top:674px;width:1147px;height:1px;background:#7f9dc8"></div>
<div style="left:272px;top:675px;width:1147px;height:1px;background:#e4ebf6"></div>
<svg style="left:278.0px;top:685.5px" width="16" height="16" viewBox="0 0 16 16"><circle cx="8.0" cy="8.0" r="7.5" fill="#ffd500" stroke="#ddb000" stroke-width="1"/></svg>
<span class="t" style="left:300px;top:686.25px;font-size:15.3px;line-height:15.3px;font-weight:700;color:#5e5e5e;letter-spacing:0.117px;">Possibly incorrect FFmpeg version!</span>
<span class="t" style="left:1256px;top:685.99px;font-size:15.6px;line-height:15.6px;font-weight:700;color:#5e5e5e;letter-spacing:0.624px;">Important Note</span>
<svg style="left:1393px;top:686px" width="14" height="14" viewBox="0 0 14 14"><circle cx="7" cy="7" r="7" fill="#5b84d4"/><path d="M5.4 5.6h2.7v4.2h.9v1.1h-3.6v-1.1h.9v-3.1h-.9z M6 2.6h2.1v2h-2.1z" fill="#fff"/></svg>
<span class="t" style="left:279px;top:720.15px;font-size:14px;line-height:14px;font-weight:700;color:#5e5e5e;letter-spacing:-0.152px;">Description</span>
<span class="t" style="left:279.79999999999995px;top:742.70px;font-size:13.7px;line-height:13.7px;font-weight:400;color:#111;letter-spacing:-0.497px;">The</span>
<span class="t" style="left:305.59999999999997px;top:742.70px;font-size:13.7px;line-height:13.7px;font-weight:400;color:#111;letter-spacing:0.478px;">ffmpeg</span>
<span class="t" style="left:352.4px;top:742.70px;font-size:13.7px;line-height:13.7px;font-weight:400;color:#111;letter-spacing:0.046px;">version</span>
<span class="t" style="left:405.09999999999997px;top:742.70px;font-size:13.7px;line-height:13.7px;font-weight:400;color:#111;transform:scaleX(0.8796);transform-origin:0 0;">is</span>
<span class="t" style="left:417.59999999999997px;top:742.70px;font-size:13.7px;line-height:13.7px;font-weight:400;color:#111;transform:scaleX(1.1350);transform-origin:0 0;">not</span>
<span class="t" style="left:443.2px;top:742.70px;font-size:13.7px;line-height:13.7px;font-weight:400;color:#111;letter-spacing:0.255px;">known</span>
<span class="t" style="left:488.29999999999995px;top:742.70px;font-size:13.7px;line-height:13.7px;font-weight:400;color:#111;transform:scaleX(1.0944);transform-origin:0 0;">to</span>
<span class="t" style="left:505.0px;top:742.70px;font-size:13.7px;line-height:13.7px;font-weight:400;color:#111;letter-spacing:-0.534px;">be</span>
<span class="t" style="left:524.1px;top:742.70px;font-size:13.7px;line-height:13.7px;font-weight:400;color:#111;letter-spacing:-0.296px;">packaged</span>
<span class="t" style="left:585.8px;top:742.70px;font-size:13.7px;line-height:13.7px;font-weight:400;color:#111;letter-spacing:0.244px;">in</span>
<span class="t" style="left:601.4px;top:742.70px;font-size:13.7px;line-height:13.7px;font-weight:400;color:#111;transform:scaleX(0.9343);transform-origin:0 0;">Emby</span>
<span class="t" style="left:639.0px;top:742.70px;font-size:13.7px;line-height:13.7px;font-weight:400;color:#111;transform:scaleX(0.9522);transform-origin:0 0;">Server</span>
<span class="t" style="left:681.5px;top:742.70px;font-size:13.7px;line-height:13.7px;font-weight:400;color:#111;transform:scaleX(0.9063);transform-origin:0 0;">release</span>
<span class="t" style="left:726.3px;top:742.70px;font-size:13.7px;line-height:13.7px;font-weight:400;color:#111;letter-spacing:0.004px;">versions</span>
</body></html>
